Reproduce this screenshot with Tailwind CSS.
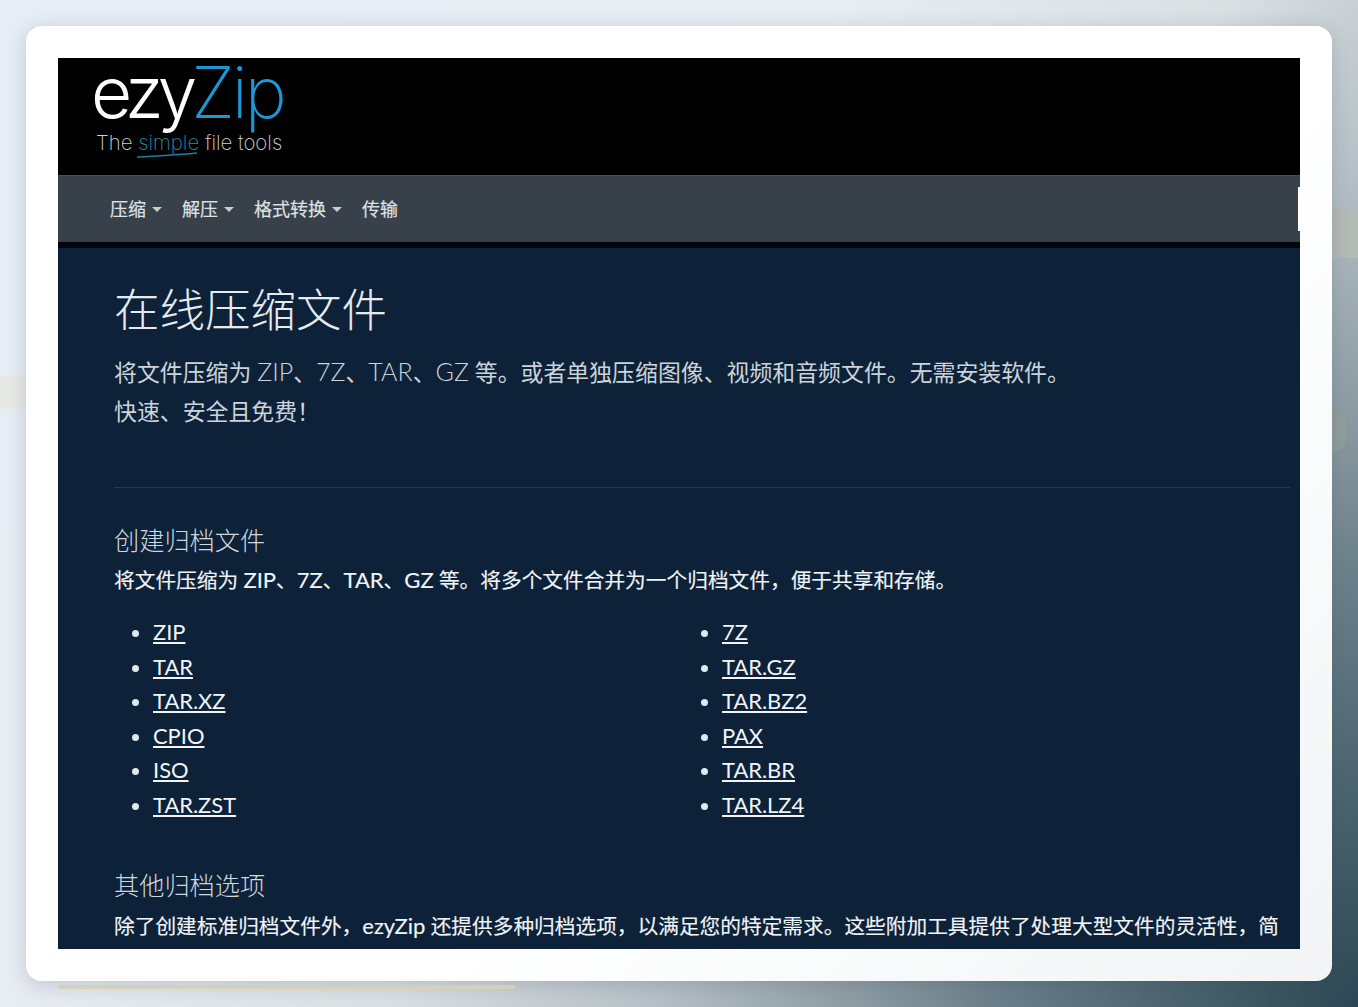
<!DOCTYPE html>
<html lang="zh">
<head>
    <meta charset="UTF-8">
    <meta name="viewport" content="width=device-width, initial-scale=1.0">
    <title>ezyZip</title>
    <script src="https://cdn.jsdelivr.net/npm/@tailwindcss/browser@4"></script>
</head>
<body class="relative h-[1007px] overflow-hidden bg-[linear-gradient(130deg,#e6edf5_0%,#e8edf3_38%,#dadfe2_56%,#b6c0c6_68%,#8d9ba3_77%,#6a7f89_83.5%,#2c4753_100%)] font-['Lato','Noto_Sans_CJK_SC',sans-serif]">
    <!-- background bits showing round the card -->
    <div class="absolute left-0 top-[376px] h-[33px] w-[26px] bg-[#e7e9e5]"></div>
    <div class="absolute left-[1332px] top-[210px] h-[48px] w-[26px] bg-[#b5bbb5]"></div>
    <div class="absolute left-[1332px] top-[407px] h-[45px] w-[14px] rounded-r-[14px] bg-[#939f9c]"></div>
    <div class="absolute left-[58px] top-[985px] h-[4px] w-[457px] bg-[#e6dfc8]"></div>

    <div class="absolute left-[26px] top-[26px] h-[955px] w-[1306px] rounded-[16px] bg-[linear-gradient(135deg,#ffffff_60%,#f2f4f5_100%)] p-[32px] shadow-[0_4px_20px_rgba(30,50,70,0.2)]">
        <div class="h-[891px] w-[1242px] overflow-hidden bg-[#0d2238] text-[#e3e9ef]">
            <header class="relative h-[117px] bg-black pl-[33px]">
                <div class="font-['Inter',sans-serif] text-[71px] leading-[68px]">
                    <span class="font-[350] tracking-[-6px] text-white">ezy</span><span class="font-[250] tracking-[-3px] text-[#1a97d5]">Zip</span>
                </div>
                <div class="ml-[5px] mt-[5px] font-['Inter',sans-serif] text-[20.4px] font-[250] leading-[24px] text-[#cfd2d4]">
                    The <span class="text-[#2c8ba8]">simple</span> file tools
                </div>
                <svg class="absolute left-[78px] top-[94px]" width="62" height="6" viewBox="0 0 62 6" fill="none"><path d="M1 5 C20 4 42 3 61 1" stroke="#1a7fa5" stroke-width="1.5"/></svg>
            </header>

            <nav class="relative flex h-[67px] items-center gap-[20px] border-t border-[#474f55] bg-[#38404a] pl-[52px] text-[18px] text-[#dfe2e4] [-webkit-text-stroke:0.2px_#dfe2e4]">
                <a class="flex items-center gap-[6px]">压缩<span class="h-0 w-0 border-x-[5px] border-t-[5px] border-x-transparent border-t-[#c9ccce]"></span></a>
                <a class="flex items-center gap-[6px]">解压<span class="h-0 w-0 border-x-[5px] border-t-[5px] border-x-transparent border-t-[#c9ccce]"></span></a>
                <a class="flex items-center gap-[6px]">格式转换<span class="h-0 w-0 border-x-[5px] border-t-[5px] border-x-transparent border-t-[#c9ccce]"></span></a>
                <a>传输</a>
                <div class="absolute right-0 top-[11px] h-[44px] w-[2px] bg-white"></div>
            </nav>
            <div class="h-[6px] bg-[#01050c]"></div>

            <main class="pl-[56px] pr-[10px]">
                <h1 class="pt-[32px] text-[45.5px] font-extralight leading-[60px] text-[#e6ebf0]">在线压缩文件</h1>
                <p class="mt-[13px] text-[22.9px] font-normal leading-[38.5px] text-[#cbd3db]">将文件压缩为 <span class="text-[25px] font-light leading-none">ZIP</span>、<span class="text-[25px] font-light leading-none">7Z</span>、<span class="text-[25px] font-light leading-none">TAR</span>、<span class="text-[25px] font-light leading-none">GZ</span> 等。或者单独压缩图像、视频和音频文件。无需安装软件。<br>快速、安全且免费！</p>
                <hr class="mt-[57px] border-[#24384c]">

                <h2 class="mt-[34px] text-[25.2px] font-light leading-[36px] text-[#d0d7de]">创建归档文件</h2>
                <p class="mt-[6px] text-[20.7px] font-normal leading-[32px] text-[#f1f4f7] [-webkit-text-stroke:0.15px_#f1f4f7]">将文件压缩为 <span class="text-[22px] leading-none">ZIP</span>、<span class="text-[22px] leading-none">7Z</span>、<span class="text-[22px] leading-none">TAR</span>、<span class="text-[22px] leading-none">GZ</span> 等。将多个文件合并为一个归档文件，便于共享和存储。</p>

                <div class="mt-[19px] grid grid-cols-[569px_1fr] text-[21.9px] leading-[34.5px] text-[#f1f5f9]">
                    <ul class="list-disc pl-[39px] marker:text-[#dfe7ef]">
                        <li><a class="underline decoration-[1.5px] underline-offset-2">ZIP</a></li>
                        <li><a class="underline decoration-[1.5px] underline-offset-2">TAR</a></li>
                        <li><a class="underline decoration-[1.5px] underline-offset-2">TAR.XZ</a></li>
                        <li><a class="underline decoration-[1.5px] underline-offset-2">CPIO</a></li>
                        <li><a class="underline decoration-[1.5px] underline-offset-2">ISO</a></li>
                        <li><a class="underline decoration-[1.5px] underline-offset-2">TAR.ZST</a></li>
                    </ul>
                    <ul class="list-disc pl-[39px] marker:text-[#dfe7ef]">
                        <li><a class="underline decoration-[1.5px] underline-offset-2">7Z</a></li>
                        <li><a class="underline decoration-[1.5px] underline-offset-2">TAR.GZ</a></li>
                        <li><a class="underline decoration-[1.5px] underline-offset-2">TAR.BZ2</a></li>
                        <li><a class="underline decoration-[1.5px] underline-offset-2">PAX</a></li>
                        <li><a class="underline decoration-[1.5px] underline-offset-2">TAR.BR</a></li>
                        <li><a class="underline decoration-[1.5px] underline-offset-2">TAR.LZ4</a></li>
                    </ul>
                </div>

                <h2 class="mt-[45px] text-[25.2px] font-light leading-[36px] text-[#d0d7de]">其他归档选项</h2>
                <p class="mt-[6px] text-[20.7px] font-normal leading-[34px] text-[#f1f4f7] [-webkit-text-stroke:0.15px_#f1f4f7]">除了创建标准归档文件外，<span class="text-[22px] leading-none">ezyZip</span> 还提供多种归档选项，以满足您的特定需求。这些附加工具提供了处理大型文件的灵活性，简化了文件管理。</p>
            </main>
        </div>
    </div>
</body>
</html>
